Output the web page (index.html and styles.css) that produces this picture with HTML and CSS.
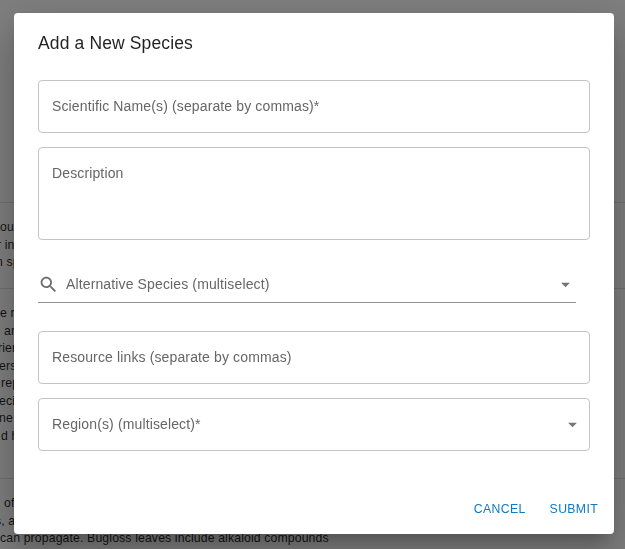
FILE: index.html
```html
<!DOCTYPE html>
<html lang="en">
<head>
<meta charset="utf-8">
<title>Add a New Species</title>
<link rel="stylesheet" href="styles.css">
</head>
<body>
<main class="page">
  <section class="row row-head"></section>
  <section class="row row-short">
    <p>ou</p><p class="cut-r">r in</p><p class="cut-n">n sp</p>
  </section>
  <section class="row row-long">
    <p>e re</p><p class="in-one">are</p><p class="cut-rien">rien</p><p class="cut-e">ers</p><p class="in-word">rep</p><p class="cut-s">eci</p><p class="cut-s">ne</p><p class="in-d">d h</p>
  </section>
  <section class="row row-last">
    <p class="in-one">of</p><p class="cut-comma">s, a</p><p>can propagate. Bugloss leaves include alkaloid compounds</p>
  </section>
</main>
<div class="backdrop">
  <form class="dialog">
    <h2 class="title">Add a New Species</h2>
    <div class="fields">
      <div class="field">Scientific Name(s) (separate by commas)*</div>
      <div class="field field-tall">Description</div>
      <div class="search">
        <svg class="search-icon" viewBox="0 0 24 24"><path d="M15.5 14h-.79l-.28-.27C15.41 12.59 16 11.11 16 9.5 16 5.91 13.09 3 9.5 3S3 5.91 3 9.5 5.91 16 9.5 16c1.61 0 3.09-.59 4.23-1.57l.27.28v.79l5 4.99L20.49 19l-4.99-5zm-6 0C7.01 14 5 11.99 5 9.5S7.01 5 9.5 5 14 7.01 14 9.5 11.99 14 9.5 14z"/></svg>
        <span class="label">Alternative Species (multiselect)</span>
        <svg class="arrow" viewBox="0 0 24 24"><path d="M7 10l5 5 5-5z"/></svg>
      </div>
      <div class="field">Resource links (separate by commas)</div>
      <div class="field field-select"><span class="label">Region(s) (multiselect)*</span>
        <svg class="arrow" viewBox="0 0 24 24"><path d="M7 10l5 5 5-5z"/></svg>
      </div>
    </div>
    <div class="actions">
      <button type="button">CANCEL</button>
      <button type="button">SUBMIT</button>
    </div>
  </form>
</div>
</body>
</html>
```
FILE: styles.css
```css
* { box-sizing: border-box; }
body {
  margin: 0;
  height: 549px;
  overflow: hidden;
  background: #fff;
  font-family: "Liberation Sans", Arial, sans-serif;
  font-size: 14px;
}
.page { height: 549px; overflow: hidden; }
.row {
  padding: 16px 0;
  border-bottom: 1px solid #e0e0e0;
  font-size: 12.25px;
  line-height: 17.5px;
  letter-spacing: 0.131px;
  color: rgba(0, 0, 0, 0.87);
}
.row p { margin: 0; white-space: nowrap; }
.row-head { height: 203px; }
.row-short { height: 86px; }
.row-long { height: 190px; }
.row-last { border: 0; }
.cut-r { text-indent: -3px; }
.cut-n { text-indent: -4px; }
.cut-rien { text-indent: -2px; }
.cut-e { text-indent: -1px; }
.cut-s { text-indent: -1px; }
.cut-comma { text-indent: -5px; }
.in-one { text-indent: 4px; }
.in-word { text-indent: 1px; }
.in-d { text-indent: 1px; }
.backdrop {
  position: fixed;
  inset: 0;
  padding: 13px 11px 15px 14px;
  background: rgba(0, 0, 0, 0.5);
}
.dialog {
  display: flex;
  flex-direction: column;
  width: 600px;
  height: 521px;
  background: #fff;
  border-radius: 4px;
  box-shadow: 0 11px 15px -7px rgba(0, 0, 0, 0.2), 0 24px 38px 3px rgba(0, 0, 0, 0.14), 0 9px 46px 8px rgba(0, 0, 0, 0.12);
}
.title {
  margin: 0;
  padding: 16px 24px;
  height: 67px;
  font-size: 17.5px;
  font-weight: 400;
  line-height: 28px;
  letter-spacing: 0.131px;
  color: rgba(0, 0, 0, 0.87);
}
.fields {
  display: flex;
  flex-direction: column;
  gap: 14px;
  padding: 0 24px;
  color: #666;
  letter-spacing: 0.131px;
}
.field {
  height: 53px;
  padding: 15px 13px;
  border: 1px solid #c4c4c4;
  border-radius: 4px;
  line-height: 20px;
}
.field-tall { height: 93px; }
.search {
  display: flex;
  align-items: center;
  width: 538px;
  height: 36px;
  margin: 13px 0 14px;
  border-bottom: 1px solid #949494;
}
.search-icon { width: 21px; height: 21px; margin-right: 7px; fill: #6b6b6b; }
.label { flex: 1; padding-bottom: 2px; }
.arrow { width: 21px; height: 21px; fill: #757575; }
.field-select {
  display: flex;
  align-items: center;
  padding: 0 6px 0 13px;
}
.actions {
  display: flex;
  justify-content: flex-end;
  gap: 8px;
  margin-top: auto;
  padding: 8px;
}
.actions button {
  height: 33px;
  padding: 0 8px;
  border: 0;
  background: none;
  color: #0b7bc9;
  font: 400 12.25px/21px "Liberation Sans", Arial, sans-serif;
  letter-spacing: 0.35px;
}
```
